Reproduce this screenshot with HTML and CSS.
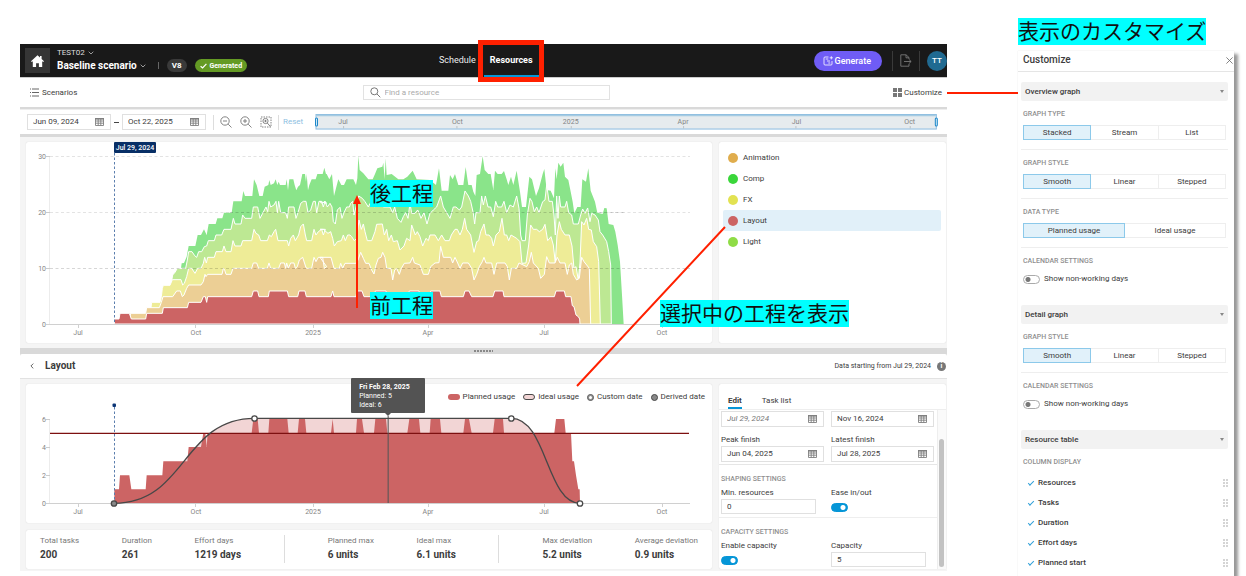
FILE: index.html
```html
<!DOCTYPE html>
<html lang="en">
<head>
<meta charset="utf-8">
<title>Resources</title>
<link rel="stylesheet" href="styles.css">
</head>
<body>
<svg class="defs" aria-hidden="true">
  <symbol id="cal" viewBox="0 0 9 8"><path d="M.5.5h8v7h-8zM.5 3h8M.5 5.200h8M3.200 1v6.500M5.800 1v6.500" fill="none" stroke="#808080" stroke-width=".9"/><path d="M0 0h9v1.600H0z" fill="#808080"/></symbol>
  <symbol id="down" viewBox="0 0 6 4"><path d="M.7.7 3 3 5.300.7" fill="none" stroke="#aaa" stroke-width=".9"/></symbol>
  <symbol id="grip" viewBox="0 0 5 8"><path d="M0 1h2M3 1h2M0 4h2M3 4h2M0 7h2M3 7h2" stroke="#aaa" stroke-width="1"/></symbol>
</svg>
<div class="page">
  <main class="app">
    <header class="topbar">
      <button class="home" aria-label="Home"><svg width="13" height="12" viewBox="0 0 13 12"><path d="M6.500.3 0 6.300l.8.8L1.800 6.300V12h3.300V8.200h2.800V12h3.300V6.300l1 .8.800-.8L10.600 4V1H9v1.600z" fill="#fff"/></svg></button>
      <div class="titles">
        <button class="project">TEST02 <svg width="6" height="4"><use href="#down"/></svg></button>
        <button class="scenario">Baseline scenario <svg width="6" height="4"><use href="#down"/></svg></button>
      </div>
      <div class="chips">
        <span class="bar-sep"></span>
        <span class="chip">V8</span>
        <span class="chip ok"><svg width="7" height="6" viewBox="0 0 7 6"><path d="M.6 3.200 2.600 5 6.400.8" fill="none" stroke="#fff" stroke-width="1.200"/></svg>Generated</span>
      </div>
      <nav class="tabs"><a href="#">Schedule</a><a href="#" class="on">Resources</a></nav>
      <div class="actions">
        <button class="generate"><svg width="10" height="10" viewBox="0 0 10 10" fill="none" stroke="#fff" stroke-width=".8"><path d="M5.500 1H2Q1 1 1 2v6q0 1 1 1h6q1 0 1-1V5"/><path d="M2.700 3h2.600M4 5h3M5.300 7h2M8.300.2v3.200M6.700 1.800h3.200"/></svg>Generate</button>
        <span class="rule"></span>
        <button class="export" aria-label="Export"><svg width="12" height="13" viewBox="0 0 12 13" fill="none" stroke="#777" stroke-width=".9"><path d="M9 5V3.500L6 .8H.8v11.400H9V10M6 .8v3h3M4 7.500h7M8.800 5.300 11.200 7.500 8.800 9.700"/></svg></button>
        <span class="rule"></span>
        <span class="avatar">TT</span>
      </div>
    </header>

    <div class="subbar">
      <button class="plain"><svg width="9" height="9" viewBox="0 0 9 9"><path d="M0 1h1M2 1h7M0 4.500h1M2 4.500h7M0 8h1M2 8h7" stroke="#666"/></svg>Scenarios</button>
      <label class="search"><svg width="11" height="11" viewBox="0 0 11 11" fill="none" stroke="#777"><circle cx="4.300" cy="4.300" r="3.500"/><path d="m7 7 3.300 3.300"/></svg><input type="text" placeholder="Find a resource" aria-label="Find a resource"></label>
      <button class="plain right"><svg width="9" height="9" viewBox="0 0 9 9" fill="#777"><path d="M0 0h4v4H0zM5 0h4v4H5zM0 5h4v4H0zM5 5h4v4H5z"/></svg>Customize</button>
    </div>

    <div class="rangebar">
      <label class="date"><input type="text" value="Jun 09, 2024" aria-label="From"><svg width="9" height="8"><use href="#cal"/></svg></label>
      <span class="dash"></span>
      <label class="date"><input type="text" value="Oct 22, 2025" aria-label="To"><svg width="9" height="8"><use href="#cal"/></svg></label>
      <span class="vsep"></span>
      <div class="zooms">
        <button aria-label="Zoom out"><svg width="12" height="12" viewBox="0 0 12 12" fill="none" stroke="#777" stroke-width=".9"><circle cx="5" cy="5" r="4.200"/><path d="M3 5h4M8.200 8.200l3.300 3.300"/></svg></button>
        <button aria-label="Zoom in"><svg width="12" height="12" viewBox="0 0 12 12" fill="none" stroke="#777" stroke-width=".9"><circle cx="5" cy="5" r="4.200"/><path d="M3 5h4M5 3v4M8.200 8.200l3.300 3.300"/></svg></button>
        <button aria-label="Zoom to selection"><svg width="12" height="12" viewBox="0 0 12 12" fill="none" stroke="#777" stroke-width=".9"><path d="M1 1h10v10H1z" stroke-dasharray="1.500 1"/><circle cx="5.500" cy="5" r="2.600"/><path d="M4.300 5h2.400M5.500 3.800v2.400M7.300 7l3 3.500"/></svg></button>
      </div>
      <span class="vsep"></span>
      <button class="reset">Reset</button>
      <div class="ruler">
        <svg viewBox="317 114 621 16" role="img" aria-label="Visible range">
          <rect x="318" y="114.500" width="618.500" height="14.500" fill="#e6ebee" stroke="#8bbce0"/>
          <path d="M318 115.500h618" stroke="#a5cbe2" stroke-width="1.500"/>
          <path d="M345.500 126v2.500M458.500 126v2.500M572.500 126v2.500M684.500 126v2.500M796.500 126v2.500M910.500 126v2.500" stroke="#bcc3c7"/>
          <g class="tick"><text x="345" y="124">Jul</text><text x="459" y="124">Oct</text><text x="572" y="124">2025</text><text x="684" y="124">Apr</text><text x="797" y="124">Jul</text><text x="910" y="124">Oct</text></g>
          <rect x="317.500" y="118" width="2" height="8" rx="1" fill="#cfe8f7" stroke="#1e88c9"/>
          <rect x="935.500" y="118" width="2" height="8" rx="1" fill="#cfe8f7" stroke="#1e88c9"/>
        </svg>
      </div>
    </div>

    <section class="split overview">
      <div class="card">
        <svg class="chart" viewBox="26 142 686 201" role="img" aria-label="Stacked resource usage">
          <path d="M50 156.500H690M50 212.500H690" stroke="#e3e3e3" stroke-dasharray="3 2.500"/>
          <path d="M49.500 156v168" stroke="#ececec"/>
          <path d="M46 156.500h4M46 212.500h4M46 268.500h4M46 324.500h4" stroke="#ccc"/>
          <g id="areas" transform="translate(20 135) scale(.33333)"></g>
          <path d="M50 268.500H690M230 212.500H625" stroke="#000" stroke-opacity=".16" stroke-dasharray="3 2.500"/>
          <path d="M46 324.500H690M78.500 325v3M195.500 325v3M313.500 325v3M428.500 325v3M544.500 325v3M662.500 325v3" stroke="#d0d0d0"/>
          <path d="M114.500 153v171" stroke="#5c7fae" stroke-dasharray="2.500 2"/>
          <rect x="114" y="142" width="42" height="11" rx="1" fill="#082f66"/>
          <text class="flag" x="135" y="150">Jul 29, 2024</text>
          <g class="tick end"><text x="46" y="159">30</text><text x="46" y="215">20</text><text x="46" y="271">10</text><text x="46" y="327">0</text></g>
          <g class="tick"><text x="78" y="335">Jul</text><text x="196" y="335">Oct</text><text x="313" y="335">2025</text><text x="428" y="335">Apr</text><text x="544" y="335">Jul</text><text x="662" y="335">Oct</text></g>
        </svg>
      </div>
      <ul class="card legend">
        <li><i class="dot c-anim"></i>Animation</li>
        <li><i class="dot c-comp"></i>Comp</li>
        <li><i class="dot c-fx"></i>FX</li>
        <li class="on"><i class="dot c-layout"></i>Layout</li>
        <li><i class="dot c-light"></i>Light</li>
      </ul>
    </section>

    <div class="splitter"><span></span></div>

    <div class="detail-head">
      <button class="back" aria-label="Back"><svg width="4" height="6" viewBox="0 0 4 6"><path d="M3.300.6.9 3l2.400 2.400" fill="none" stroke="#666"/></svg></button>
      <h2>Layout</h2>
      <span class="since">Data starting from Jul 29, 2024</span>
      <span class="info">i</span>
    </div>

    <section class="split detail">
      <div class="stack">
        <div class="card detail-chart">
          <div class="keys">
            <span><i class="pill planned"></i>Planned usage</span>
            <span><i class="pill ideal"></i>Ideal usage</span>
            <span><i class="ring"></i>Custom date</span>
            <span><i class="ring filled"></i>Derived date</span>
          </div>
          <svg class="chart" viewBox="26 403 686 120" role="img" aria-label="Layout usage">
            <path d="M49.500 419v84" stroke="#ececec"/>
            <path d="M46 419.500h4M46 447.500h4M46 475.500h4" stroke="#ccc"/>
            <g transform="translate(20 345) scale(.33333)">
              <path d="M282 475C500 475 486 220 704 220H1474C1580 220 1580 475 1680 475Z" fill="#f2d5d5"/>
              <path id="planned" fill="#cc6464"/>
            </g>
            <path d="M46 503.500H690M78.500 504v3M195.500 504v3M313.500 504v3M428.500 504v3M544.500 504v3M662.500 504v3" stroke="#d0d0d0"/>
            <path d="M50 433.300H689" stroke="#7d1010" stroke-width="1.300"/>
            <path d="M388.200 416v87" stroke="#555" stroke-opacity=".75" stroke-width="1.400"/>
            <g transform="translate(20 345) scale(.33333)"><path d="M282 475C500 475 486 220 704 220H1474C1580 220 1580 475 1680 475" fill="none" stroke="#484848" stroke-width="4"/></g>
            <path d="M114.500 407v95" stroke="#5c7fae" stroke-dasharray="2.500 2"/>
            <rect x="112.500" y="403.500" width="3.500" height="3.500" rx="1" fill="#0b3576"/>
            <g stroke="#484848" stroke-width="1.300"><circle cx="114" cy="503.500" r="2.700" fill="#888"/><circle cx="254.500" cy="418.500" r="2.700" fill="#fff"/><circle cx="511.300" cy="418.500" r="2.700" fill="#fff"/><circle cx="580" cy="503.500" r="2.700" fill="#fff"/></g>
            <g class="tick end"><text x="46" y="422">6</text><text x="46" y="450">4</text><text x="46" y="478">2</text><text x="46" y="506">0</text></g>
            <g class="tick"><text x="78" y="514">Jul</text><text x="196" y="514">Oct</text><text x="313" y="514">2025</text><text x="428" y="514">Apr</text><text x="544" y="514">Jul</text><text x="662" y="514">Oct</text></g>
          </svg>
          <div class="tip"><b>Fri Feb 28, 2025</b><br>Planned: 5<br>Ideal: 6</div>
        </div>
        <dl class="card stats">
          <div><dt>Total tasks</dt><dd>200</dd></div>
          <div><dt>Duration</dt><dd>261</dd></div>
          <div><dt>Effort days</dt><dd>1219 days</dd></div>
          <div class="lined"><dt>Planned max</dt><dd>6 units</dd></div>
          <div><dt>Ideal max</dt><dd>6.1 units</dd></div>
          <div class="lined"><dt>Max deviation</dt><dd>5.2 units</dd></div>
          <div><dt>Average deviation</dt><dd>0.9 units</dd></div>
        </dl>
      </div>
      <div class="card editor">
        <div class="ed-tabs"><button class="on">Edit</button><button>Task list</button></div>
        <div class="ed-body">
          <form class="form">
            <div class="pair dates">
              <label class="date derived"><input type="text" value="Jul 29, 2024" aria-label="Start"><svg width="9" height="8"><use href="#cal"/></svg></label>
              <label class="date"><input type="text" value="Nov 16, 2024" aria-label="Peak start"><svg width="9" height="8"><use href="#cal"/></svg></label>
              <div><label for="pf">Peak finish</label><div class="date"><input id="pf" type="text" value="Jun 04, 2025"><svg width="9" height="8"><use href="#cal"/></svg></div></div>
              <div><label for="lf">Latest finish</label><div class="date"><input id="lf" type="text" value="Jul 28, 2025"><svg width="9" height="8"><use href="#cal"/></svg></div></div>
            </div>
            <h3>SHAPING SETTINGS</h3>
            <div class="pair shaping">
              <div><label for="mr">Min. resources</label><input class="num" id="mr" type="text" value="0"></div>
              <div><label for="ez">Ease in/out</label><input class="switch blue" id="ez" type="checkbox" checked></div>
            </div>
            <h3>CAPACITY SETTINGS</h3>
            <div class="pair">
              <div><label for="ec">Enable capacity</label><input class="switch blue" id="ec" type="checkbox" checked></div>
              <div><label for="cp">Capacity</label><input class="num" id="cp" type="text" value="5"></div>
            </div>
          </form>
          <div class="track"><span></span></div>
        </div>
      </div>
    </section>
  </main>

  <aside class="side">
    <mark lang="ja">表示のカスタマイズ</mark>
    <div class="panel">
      <header><h2>Customize</h2><button aria-label="Close"><svg width="7" height="7" viewBox="0 0 7 7"><path d="m.4.4 6.200 6.200M6.600.4.4 6.600" stroke="#666" stroke-width=".8"/></svg></button></header>
      <div class="groups">
        <button class="fold">Overview graph<i></i></button>
        <div class="group"><h3>GRAPH TYPE</h3><div class="seg"><button class="on">Stacked</button><button>Stream</button><button>List</button></div></div>
        <div class="group"><h3>GRAPH STYLE</h3><div class="seg"><button class="on">Smooth</button><button>Linear</button><button>Stepped</button></div></div>
        <div class="group"><h3>DATA TYPE</h3><div class="seg"><button class="on">Planned usage</button><button>Ideal usage</button></div></div>
        <div class="group last"><h3>CALENDAR SETTINGS</h3><label class="opt"><input class="switch" type="checkbox">Show non-working days</label></div>
        <button class="fold">Detail graph<i></i></button>
        <div class="group"><h3>GRAPH STYLE</h3><div class="seg"><button class="on">Smooth</button><button>Linear</button><button>Stepped</button></div></div>
        <div class="group last"><h3>CALENDAR SETTINGS</h3><label class="opt"><input class="switch" type="checkbox">Show non-working days</label></div>
        <button class="fold">Resource table<i></i></button>
        <div class="group columns"><h3>COLUMN DISPLAY</h3>
          <label><input type="checkbox" checked><span>Resources</span><svg width="5" height="8"><use href="#grip"/></svg></label>
          <label><input type="checkbox" checked><span>Tasks</span><svg width="5" height="8"><use href="#grip"/></svg></label>
          <label><input type="checkbox" checked><span>Duration</span><svg width="5" height="8"><use href="#grip"/></svg></label>
          <label><input type="checkbox" checked><span>Effort days</span><svg width="5" height="8"><use href="#grip"/></svg></label>
          <label><input type="checkbox" checked><span>Planned start</span><svg width="5" height="8"><use href="#grip"/></svg></label>
        </div>
      </div>
    </div>
  </aside>

  <svg class="notes" width="1246" height="576" viewBox="0 0 1246 576" aria-hidden="true" fill="none" stroke="#ff2000">
    <rect x="480.500" y="42.500" width="61" height="37" stroke-width="5"/>
    <path d="M357 308V200" stroke-width="2"/><path d="m357 195 4 9h-8z" fill="#ff2000" stroke="none"/>
    <path d="M725 227 577 386M947 93h71" stroke-width="2"/>
  </svg>
  <mark class="note later" lang="ja">後工程</mark>
  <mark class="note earlier" lang="ja">前工程</mark>
  <mark class="note selected" lang="ja">選択中の工程を表示</mark>
</div>
<script src="chart.js"></script>
</body>
</html>
```

FILE: styles.css
```css
* { box-sizing: border-box; }
html, body { height: 100%; }
body { margin: 0; background: #fff; color: #3c3c3c; font: 8px/12px Roboto, "Noto Sans", sans-serif; overflow: hidden; }
button, input { font: inherit; color: inherit; margin: 0; }
button { background: none; border: 0; padding: 0; display: flex; align-items: center; white-space: nowrap; }
input { border: 0; padding: 0; background: none; min-width: 0; outline: 0; }
h2, h3, dl, dd, ul { margin: 0; padding: 0; }
svg { display: block; flex: none; }
.defs { position: absolute; width: 0; height: 0; }
mark { background: #00ffff; color: #111; font: 400 21px/25px "Noto Sans CJK JP", sans-serif; padding-bottom: 2px; white-space: nowrap; }

.page { position: relative; display: flex; gap: 71px; min-height: 100vh; padding: 18px 12px 0 20px; }
.app { flex: 1; min-width: 0; margin-top: 26px; background: #d9d9d9; align-self: flex-start; }

/* top bar */
.topbar { display: grid; grid-template-columns: auto auto auto 1fr; align-items: stretch; background: #191919; color: #fff; height: 33px; position: relative; padding-left: 5px; }
.home { width: 25px; height: 25px; background: #353535; justify-content: center; align-self: center; }
.titles { margin-left: 7px; padding-top: 3px; }
.project, .scenario { gap: 3px; line-height: 11px; }
.project { color: #ddd; }
.scenario { font-size: 10px; font-weight: 700; line-height: 15px; }
.chips { display: flex; align-items: center; gap: 8px; margin-left: 12px; padding-top: 10px; }
.bar-sep { width: 1px; height: 7px; background: #666; }
.chip { display: flex; align-items: center; gap: 3px; height: 13px; padding: 0 5px; border-radius: 7px; background: #3a3a3a; font-weight: 700; }
.chip.ok { background: #649a24; font-size: 7px; }
.tabs { position: absolute; left: 45.2%; top: 0; height: 100%; display: flex; gap: 8px; font-size: 9px; }
.tabs a { color: #eee; text-decoration: none; display: flex; align-items: center; padding-bottom: 2px; }
.tabs .on { color: #fff; font-weight: 700; padding: 0 6px; border-bottom: 2px solid #0696d7; }
.actions { display: flex; align-items: center; justify-content: flex-end; gap: 7px; }
.generate { height: 20px; padding: 0 11px 0 9px; border-radius: 10px; background: #6f5cf5; color: #fff; font-weight: 500; font-size: 9px; gap: 2px; margin-right: 3px; }
.rule { width: 1px; height: 20px; background: #3a3a3a; }
.rule + .avatar { margin-left: 0; }
.avatar { width: 20px; height: 20px; border-radius: 50%; background: #206a91; font-weight: 500; display: grid; place-items: center; }

/* scenario and search row */
.subbar { display: grid; grid-template-columns: 1fr 247px 1fr; align-items: center; background: #fff; border-top: 1px solid #ccc; height: 30px; padding: 0 5px 0 10px; }
.plain { gap: 3px; }
.plain.right { justify-self: end; gap: 2px; }
.search { display: flex; align-items: center; gap: 4px; height: 15px; padding: 0 6px; border: 1px solid #e2e2e2; }
.search input { flex: 1; }
.search input::placeholder { color: #aaa; opacity: 1; }

/* date range row */
.rangebar { display: flex; align-items: center; height: 25px; margin: 2px 0 3px; padding: 0 9px 0 7px; background: #fff; border-top: 1px solid #eee; }
.date { display: flex; align-items: center; justify-content: space-between; height: 16px; padding: 0 6px 0 5px; border: 1px solid #e0e0e0; background: #fff; }
.date input { flex: 1; width: 40px; }
.rangebar .date { width: 84px; }
.dash { width: 5px; height: 1px; margin: 0 3px; background: #444; }
.vsep { width: 1px; height: 15px; background: #ddd; margin: 0 6px 0 7px; }
.zooms { display: flex; gap: 8px; }
.zooms + .vsep { margin: 0 4px 0 6px; }
.reset { color: #8fbfe2; margin-right: 12px; }
.ruler { flex: 1; min-width: 0; }
.ruler svg, .chart { width: 100%; height: auto; }
.tick { fill: #858585; font-size: 7px; text-anchor: middle; }
.tick.end { text-anchor: end; }
.flag { fill: #fff; font-size: 7px; font-weight: 500; text-anchor: middle; }

/* chart areas */
.split { display: grid; grid-template-columns: 686fr 227fr; gap: 7px; background: #f5f5f5; padding: 5px 1px 5px 6px; }
.card { background: #fff; border-radius: 2px; min-width: 0; box-shadow: 0 0 1px #ccc; }
.legend { list-style: none; padding: 5px 5px 5px 4px; }
.legend li { display: flex; align-items: center; gap: 5px; height: 21px; padding: 0 6px 0 5px; border-radius: 2px; }
.legend .on { background: #e1f0f9; }
.dot { width: 10px; height: 10px; border-radius: 50%; }
.c-anim { background: #e0ad4d; }
.c-comp { background: #3ad63a; }
.c-fx { background: #e2e252; }
.c-layout { background: #cc6464; }
.c-light { background: #8fdc46; }
.splitter { height: 6px; display: grid; place-items: center; }
.splitter span { width: 19px; height: 2px; background: repeating-linear-gradient(90deg, #888 0 2px, transparent 2px 3px); }

/* detail area */
.detail-head { display: flex; align-items: center; height: 25px; background: #fff; padding: 0 1px 0 10px; border-bottom: 1px solid #e2e2e2; border-radius: 2px 2px 0 0; }
.detail-head h2 { font-size: 10px; font-weight: 700; margin-left: 11px; flex: 1; }
.since { font-size: 7px; }
.info { width: 9px; height: 9px; margin-left: 6px; border-radius: 50%; background: #777; color: #fff; font-weight: 700; font-size: 7px; line-height: 9px; text-align: center; }
.stack { display: grid; gap: 7px; min-width: 0; align-content: space-between; }
.detail { padding-bottom: 2px; }
.detail-chart { position: relative; padding-top: 7px; }
.keys { display: flex; justify-content: flex-end; gap: 8px; padding-right: 7px; }
.keys span { display: flex; align-items: center; gap: 3px; }
.pill { width: 12px; height: 6px; border-radius: 3px; background: #cc6464; }
.pill.ideal { background: #f2d5d5; border: 1px solid #484848; }
.ring { width: 7px; height: 7px; border-radius: 50%; border: 1px solid #484848; background: #fff; box-shadow: inset 0 0 0 1px #8a8a8a; }
.ring.filled { background: #888; }
.tip { position: absolute; left: 47.4%; top: -6px; width: 74px; padding: 5px 8px 3px; background: #535353; color: #fff; font-size: 7px; line-height: 9px; border-radius: 1px; }
.tip::after { content: ""; position: absolute; left: 34px; top: 100%; border: 3px solid transparent; border-top-color: #535353; }
.stats { display: flex; justify-content: space-between; padding: 5px 14px 6px; }
.stats dt { color: #777; }
.stats dd { font-size: 10px; font-weight: 700; line-height: 16px; }
.stats .lined { border-left: 1px solid #ddd; padding-left: 43px; }

/* editor */
.editor { display: flex; flex-direction: column; }
.ed-tabs { display: flex; gap: 20px; padding: 11px 9px 0; border-bottom: 1px solid #eee; }
.ed-tabs button { height: 14px; border-bottom: 2px solid transparent; }
.ed-tabs .on { font-weight: 700; border-color: #0696d7; }
.ed-body { display: flex; flex: 1; }
.form { flex: 1; min-width: 0; }
.form h3, .group h3 { font-size: 7px; line-height: 12px; font-weight: 500; color: #8f8f8f; }
.form h3 { padding: 8px 0 2px 2px; }
.pair { display: grid; grid-template-columns: 1fr 1fr; column-gap: 7px; padding: 0 3px 0 2px; align-items: start; }
.pair label:not(.date) { display: block; }
.dates { row-gap: 7px; padding-top: 1px; padding-bottom: 2px; border-bottom: 1px solid #e6e6e6; }
.shaping { padding-bottom: 3px; border-bottom: 1px solid #eee; }
.derived input { font-style: italic; color: #777; }
.num { display: block; width: 95px; max-width: 100%; height: 15px; padding: 0 5px; border: 1px solid #e0e0e0; }
.switch { appearance: none; display: block; flex: none; width: 17px; height: 9px; border: 1px solid #aaa; border-radius: 5px; background: radial-gradient(circle at 4px 50%, #777 0 2px, transparent 3px) #fff; }
.switch.blue { margin-top: 4px; border-color: #0696d7; background: radial-gradient(circle at 11px 50%, #fff 0 2px, transparent 3px) #0696d7; }
.track { width: 9px; border-left: 1px solid #eee; background: #fafafa; padding: 29px 2px 2px 1px; display: flex; }
.track span { flex: 1; border-radius: 3px; background: #c2c2c2; }

/* customize panel */
.side { width: 216px; flex: none; display: flex; flex-direction: column; align-items: flex-start; gap: 6px; }
.panel { flex: 1; width: 100%; background: #fff; box-shadow: 4px 3px 3px #999, 0 0 1px #ddd; }
.panel header { display: flex; align-items: center; justify-content: space-between; height: 21px; padding: 0 1px 2px 5px; border-bottom: 1px solid #e5e5e5; }
.panel h2 { font-size: 10px; font-weight: 500; }
.groups { padding: 10px 6px 0 3px; }
.fold { width: 100%; height: 19px; justify-content: space-between; padding: 0 4px; background: #f2f2f2; border-radius: 2px; font-weight: 500; }
.fold i { border: 2px solid transparent; border-top: 3px solid #888; border-bottom: 0; }
.group { padding: 7px 2px 9px; border-bottom: 1px solid #eee; }
.group h3 { margin-bottom: 5px; }
.seg { display: flex; }
.seg button { flex: 1; height: 15px; justify-content: center; border: 1px solid #eee; border-left-width: 0; }
.seg .on { background: #e1f1fa; border: 1px solid #8cc9ea; }
.group.last { border: 0; padding-bottom: 20px; }
.group.last h3 { margin-bottom: 6px; }
.opt { display: flex; align-items: center; gap: 4px; }
.columns { border: 0; }
.columns h3 { margin-bottom: 5px; }
.columns label { display: flex; align-items: center; height: 20px; padding: 0 0 0 5px; font-weight: 500; }
.columns label svg { margin-right: -2px; }
.columns span { flex: 1; }
.columns input { appearance: none; width: 6px; height: 3px; margin: 0 4px 2px 0; border: solid #2f9fd8; border-width: 0 0 1px 1px; transform: rotate(-45deg); }

/* annotations drawn over the capture */
.notes { position: absolute; left: 0; top: 0; pointer-events: none; }
.note { position: absolute; }
.later { left: 370px; top: 180px; }
.earlier { left: 370px; top: 292px; }
.selected { left: 660px; top: 300px; }
```

FILE: chart.js
```js
// Outline of each department's stacked total: [early, late]; late x values are counted from the window's second half.
const HALF = 900, BASE = 567;
const series = [
  ["#8ae48a", "483,400 485,385 492,384 500,365 506,333 526,333 533,300 543,300 552,283 560,300 566,267 587,267 592,250 607,250 612,233 635,233 640,199 665,199 670,168 675,183 697,183 702,133 710,150 718,183 728,183 734,155 745,150 748,135 752,150 762,145 767,133 772,150 776,140 780,150 797,150 800,133 804,166 808,133 820,133 824,150 829,166 834,155 840,150 847,117 855,117 858,140 860,117 864,166 868,150 875,133 887,133 892,117 908,117 913,98 918,117",
   "0,117 12,117 20,117 28,133 36,117 42,183 48,160 55,133 64,150 72,150 80,133 100,133 108,150 112,130 115,62 119,105 130,115 145,133 158,133 165,117 172,100 187,95 190,83 194,133 197,70 200,120 215,117 235,133 250,133 262,125 278,107 290,133 330,135 348,150 357,100 365,167 385,167 390,120 398,133 405,117 415,150 430,150 437,96 445,150 455,150 460,170 466,183 470,120 480,117 488,64 494,105 505,117 512,117 520,165 525,107 533,117 545,117 552,108 560,133 565,150 573,125 580,150 590,107 600,170 606,216 618,216 628,125 636,133 648,183 657,160 668,117 673,102 680,165 692,167 702,190 706,100 710,133 715,83 722,95 730,83 735,125 745,135 750,160 758,200 763,235 772,216 782,216 787,133 798,140 805,100 812,167 825,200 832,233 848,237 853,219 860,220 866,267 880,270 886,290 893,330 900,380 906,480 911,567"],
  ["#bde893", "453,450 458,420 465,412 472,400 497,400 502,375 506,350 516,350 524,362 530,367 536,350 545,350 553,335 560,333 565,317 583,317 588,300 605,300 612,283 633,283 640,250 645,267 663,267 668,240 675,250 695,250 700,216 713,216 720,250 728,235 738,216 743,230 747,199 752,216 762,210 768,199 772,233 776,199 782,233 797,233 802,250 806,216 822,216 828,250 834,233 842,205 850,199 858,199 864,233 872,225 880,199 886,199 890,233 897,199 905,199 910,216 915,199 920,205",
   "0,200 6,205 15,199 22,216 30,205 36,216 40,260 46,267 52,225 60,217 66,250 72,233 80,216 88,216 92,205 98,199 102,240 108,216 116,183 127,190 135,200 145,216 150,205 165,216 180,199 190,216 198,216 210,216 218,233 224,216 232,250 243,262 250,245 257,233 264,250 270,205 275,235 285,235 293,225 297,233 303,250 312,233 321,267 330,235 340,225 350,216 362,183 370,216 380,233 390,250 400,216 408,216 418,225 425,216 435,168 445,183 452,199 460,235 464,267 468,233 480,233 485,183 490,210 496,183 504,216 512,216 520,245 527,199 533,216 545,216 552,199 560,233 570,210 580,216 590,183 597,220 602,300 606,317 616,317 622,240 630,190 636,200 643,230 650,216 657,233 668,200 675,195 680,150 687,199 697,199 702,240 706,300 710,183 714,250 718,183 722,216 735,216 740,199 746,233 755,240 760,267 775,267 782,240 788,222 795,235 803,219 810,260 815,235 825,240 835,255 840,290 848,300 860,320 866,350 872,390 874,567"],
  ["#eeec97", "393,518 395,502 420,502 424,485 427,460 430,451 450,451 457,434 483,434 488,450 493,445 500,425 506,400 515,400 525,415 533,400 543,400 550,385 554,367 559,384 563,367 583,367 588,350 607,350 612,333 618,350 633,350 639,317 645,333 663,333 668,317 695,317 702,283 708,295 716,300 722,317 742,317 748,300 754,305 762,290 767,283 774,317 802,317 806,333 812,310 820,300 826,317 836,300 842,275 850,267 856,300 860,317 875,317 882,283 888,300 895,290 905,283 910,300 916,283",
   "0,283 10,283 18,290 24,295 32,290 38,310 43,333 52,320 64,317 70,300 76,317 83,300 90,300 95,305 103,317 110,310 117,255 124,283 130,267 135,290 142,317 155,317 165,290 170,268 187,267 193,300 200,283 206,317 214,300 220,320 232,317 240,345 252,333 260,310 270,317 275,270 286,300 292,290 300,305 308,333 315,317 318,310 325,317 330,300 345,300 355,317 365,300 375,317 388,317 394,300 405,283 412,283 420,300 427,283 434,250 440,283 452,300 462,352 470,320 476,317 482,290 492,267 498,300 507,300 515,310 520,333 528,300 538,290 546,250 553,300 560,300 566,317 573,300 590,310 600,320 606,385 618,384 626,330 632,270 640,283 650,283 658,290 668,283 675,268 683,317 693,305 700,330 706,384 711,300 718,260 724,283 735,300 748,300 756,333 762,400 768,395 775,435 780,384 785,260 792,270 800,250 806,283 814,285 820,320 830,335 836,380 841,567"],
  ["#eccf95", "331,535 377,535 380,518 418,518 424,502 429,485 458,485 470,468 481,468 487,485 492,480 500,460 506,450 543,450 550,440 555,418 558,425 563,418 606,418 610,400 614,405 618,418 633,418 639,400 695,400 700,384 710,384 716,400 742,400 747,384 752,400 776,400 782,384 793,384 797,400 800,384 805,400 812,384 822,384 826,400 832,395 838,375 848,367 858,398 862,400 875,400 882,367 888,380 895,367 908,367 913,400 920,395",
   "0,367 33,367 42,400 58,400 62,385 68,400 75,385 105,385 110,384 116,370 122,352 130,370 137,385 147,385 155,405 162,417 168,390 175,370 183,367 188,352 195,367 200,400 213,400 218,435 224,405 230,400 238,418 244,400 253,385 270,384 278,367 283,384 300,390 310,418 325,418 332,395 345,384 357,383 362,334 370,367 392,367 398,384 405,367 413,384 420,400 428,384 445,384 455,400 462,435 470,418 478,395 487,380 492,367 498,384 515,384 522,418 530,384 555,384 562,395 568,435 574,400 590,400 597,384 620,395 628,380 634,352 640,384 655,400 662,430 673,418 680,365 688,384 705,384 712,367 720,384 735,384 742,418 748,390 755,384 760,418 770,435 778,430 785,367 792,380 800,390 808,400 812,567"],
  ["#cc6464", "283,552 297,552 300,535 328,535 334,552 377,552 380,535 427,535 430,518 502,518 506,502 543,502 550,485 556,485 560,502 563,485 695,485 700,468 713,468 717,485 745,485 748,468 802,468 806,485 833,485 837,468 855,468 859,485",
   "0,485 33,485 38,468 42,485 108,485 111,468 126,468 132,485 162,485 166,468 198,468 202,485 262,485 268,468 297,468 301,485 329,485 332,468 360,468 364,485 430,485 435,468 447,468 455,485 519,485 524,468 549,468 552,485 703,485 708,468 733,468 737,485 753,485 757,512 762,515 768,540 775,545 779,552 780,567"],
];
const points = ([, early, late]) => {
  const parse = (s, dx) => s.split(" ").map(p => p.split(",").map(Number)).map(([x, y]) => [x + dx, y]);
  return [...parse(early, 0), ...parse(late, HALF)];
};
const area = (pts, base) => `M${pts[0][0]} ${base}` + pts.map(p => `L${p[0]} ${p[1]}`).join("") + `L${pts[pts.length - 1][0]} ${base}Z`;

const holder = document.getElementById("areas");
for (const s of series) {
  const path = document.createElementNS("http://www.w3.org/2000/svg", "path");
  path.setAttribute("d", area(points(s), BASE));
  path.setAttribute("fill", s[0]);
  path.setAttribute("stroke", s === series[0] ? "none" : "#fff");
  path.setAttribute("stroke-width", "3");
  holder.append(path);
}

// The detail chart shows the same Layout series on a taller scale.
const layout = points(series[4]).map(([x, y]) => [x, 475 - Math.round((BASE - y) / 16.5) * 42.2]);
document.getElementById("planned").setAttribute("d", area(layout, 475));
```
